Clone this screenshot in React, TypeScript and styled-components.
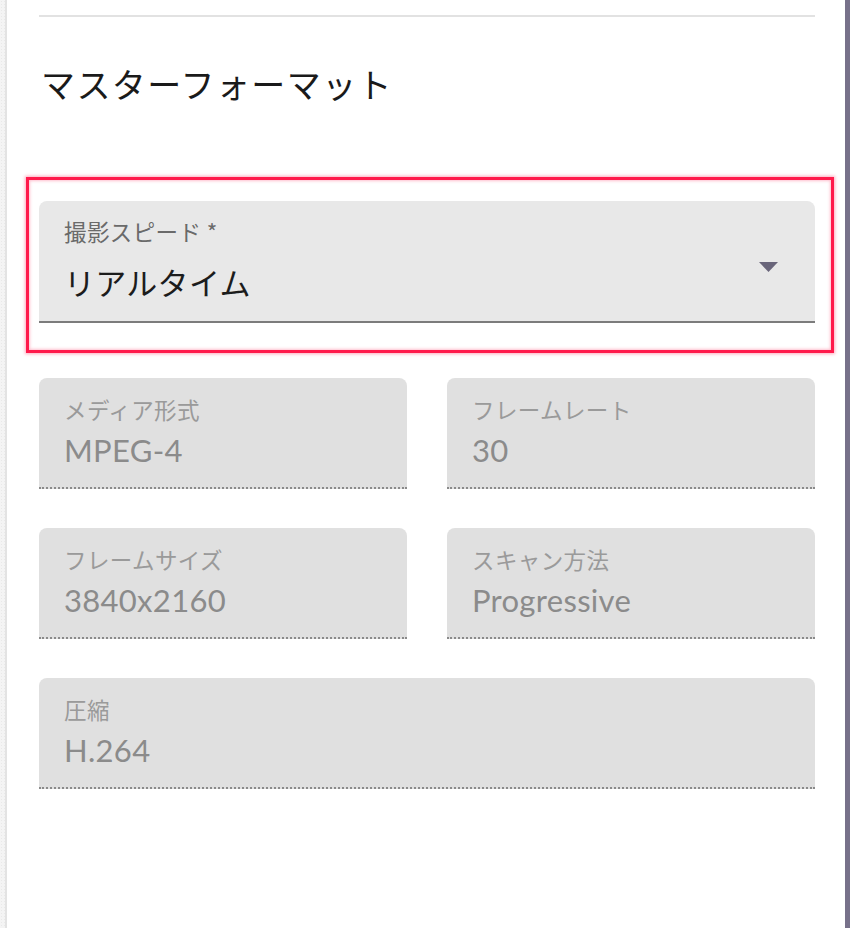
import React from "react";
import styled, { createGlobalStyle } from "styled-components";

const GlobalStyle = createGlobalStyle`
  html, body {
    margin: 0;
    padding: 0;
    background: #ffffff;
  }
  body {
    font-family: "Lato", "Noto Sans CJK JP", sans-serif;
  }
`;

const Page = styled.div`
  display: flex;
  width: 850px;
  min-height: 928px;
  background: #ffffff;
`;

const LeftEdge = styled.div`
  flex: 0 0 5px;
  background-color: #f4f4f4;
  background-image: radial-gradient(#e9e9e9 0.6px, transparent 0.8px);
  background-size: 3px 3px;
  border-right: 2px solid #e3e3e3;
`;

const RightStrip = styled.div`
  flex: 0 0 5px;
  background: #77718a;
`;

const Main = styled.main`
  flex: 1;
  display: flex;
  flex-direction: column;
  padding: 15px 30px 0 32px;
`;

const Divider = styled.hr`
  margin: 0;
  border: none;
  height: 2px;
  background: #e2e2e2;
`;

const Title = styled.h2`
  margin: 46px 0 0 2px;
  font-family: "Noto Sans CJK JP", sans-serif;
  font-weight: 400;
  font-size: 34px;
  line-height: 41px;
  color: #1a1a1a;
  letter-spacing: 1.4px;
`;

const Highlight = styled.div`
  margin: 73px -19px 0 -13px;
  padding: 21px 16px 27px 10px;
  border: 3px solid #ff1a4b;
  box-shadow: 0 0 3px 1px rgba(255, 40, 90, 0.4), inset 0 0 3px 1px rgba(255, 40, 90, 0.3);
`;

const FieldBox = styled.div<{ $disabled?: boolean; $tall?: boolean }>`
  position: relative;
  display: flex;
  flex-direction: column;
  box-sizing: border-box;
  height: ${(p) => (p.$tall ? "122px" : "111px")};
  padding: ${(p) => (p.$tall ? "19px 25px 0" : "20px 25px 0")};
  background: ${(p) => (p.$disabled ? "#e0e0e0" : "#e8e8e8")};
  border-radius: 8px 8px 0 0;
  border-bottom: 2px ${(p) => (p.$disabled ? "dotted #8a8a8a" : "solid #7c7c7c")};
`;

const Label = styled.label<{ $disabled?: boolean }>`
  font-family: "Noto Sans CJK JP", sans-serif;
  font-size: 22.5px;
  line-height: 23px;
  color: ${(p) => (p.$disabled ? "#9a9a9a" : "#6a6a6a")};
  letter-spacing: 0.4px;
`;

const Value = styled.div<{ $disabled?: boolean }>`
  margin-top: ${(p) => (p.$disabled ? "14px" : "25px")};
  font-family: "Lato", "Noto Sans CJK JP", sans-serif;
  font-size: 31px;
  line-height: 30px;
  color: ${(p) => (p.$disabled ? "#8b8b8b" : "#1c1c1c")};
  letter-spacing: 0.3px;
`;

const Arrow = styled.svg`
  position: absolute;
  right: 37px;
  top: 61px;
  width: 19px;
  height: 10px;
`;

const Grid = styled.div`
  display: grid;
  grid-template-columns: 1fr 1fr;
  column-gap: 40px;
  row-gap: 39px;
  margin-top: 25px;
`;

const Wide = styled.div`
  grid-column: 1 / span 2;
`;

type F = { label: string; value: string; wide?: boolean };

const fields: F[] = [
  { label: "メディア形式", value: "MPEG-4" },
  { label: "フレームレート", value: "30" },
  { label: "フレームサイズ", value: "3840x2160" },
  { label: "スキャン方法", value: "Progressive" },
  { label: "圧縮", value: "H.264", wide: true },
];

const ReadOnlyField = ({ label, value }: F) => (
  <FieldBox $disabled>
    <Label $disabled>{label}</Label>
    <Value $disabled>{value}</Value>
  </FieldBox>
);

export default function App() {
  return (
    <>
      <GlobalStyle />
      <Page>
        <LeftEdge />
        <Main>
          <Divider />
          <Title>マスターフォーマット</Title>
          <Highlight>
            <FieldBox $tall>
              <Label>撮影スピード *</Label>
              <Value>リアルタイム</Value>
              <Arrow viewBox="0 0 19 10">
                <polygon points="0,0 19,0 9.5,10" fill="#69657a" />
              </Arrow>
            </FieldBox>
          </Highlight>
          <Grid>
            {fields.map((f) =>
              f.wide ? (
                <Wide key={f.label}>
                  <ReadOnlyField {...f} />
                </Wide>
              ) : (
                <ReadOnlyField key={f.label} {...f} />
              )
            )}
          </Grid>
        </Main>
        <RightStrip />
      </Page>
    </>
  );
}
